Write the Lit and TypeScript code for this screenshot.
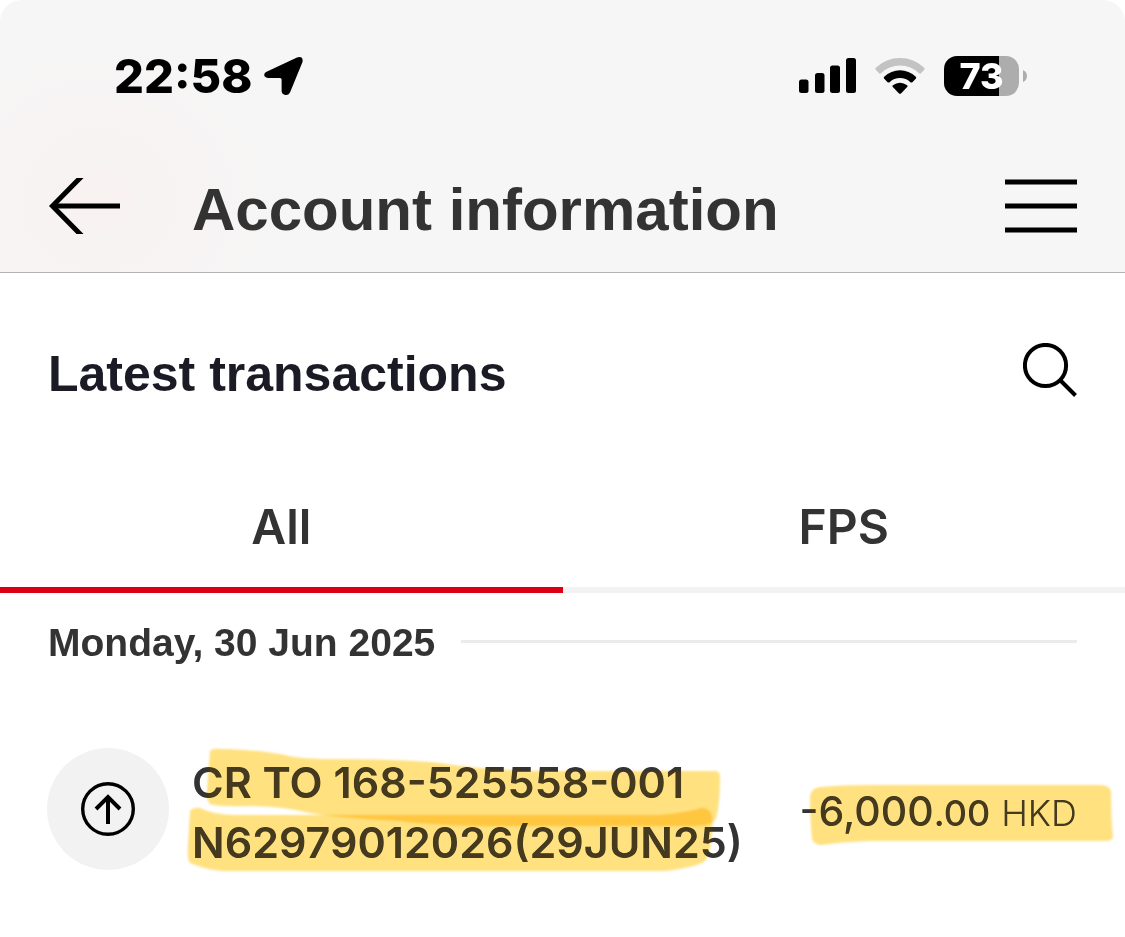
import { LitElement, html, css, svg } from "lit";
import { customElement, property, state } from "lit/decorators.js";
import { classMap } from "lit/directives/class-map.js";

const fontStack = css`"Inter", "Liberation Sans", sans-serif`;
const headingStack = css`"Liberation Sans", Arial, sans-serif`;

@customElement("status-bar")
class StatusBar extends LitElement {
  @property() time = "";
  @property({ type: Number }) battery = 100;

  static styles = css`
    :host {
      display: flex;
      justify-content: space-between;
      align-items: center;
      height: 152px;
      padding: 0 98px 0 114px;
      box-sizing: border-box;
      font-family: ${fontStack};
      color: #000;
    }
    .group {
      display: flex;
      align-items: center;
    }
    .left {
      gap: 12px;
    }
    .right {
      gap: 19px;
    }
    .time {
      font-size: 47px;
      line-height: 56px;
      font-weight: 800;
    }
    svg {
      display: block;
    }
    .power {
      display: flex;
      align-items: center;
      gap: 4px;
    }
    .cell {
      display: flex;
      align-items: center;
      justify-content: center;
      width: 75px;
      height: 40px;
      border-radius: 13px;
      background: linear-gradient(90deg, #000 73%, #adadad 73%);
      color: #fff;
      font-size: 36px;
      line-height: 40px;
      font-weight: 800;
    }
  `;

  render() {
    return html`
      <div class="group left">
        <span class="time">${this.time}</span>
        <svg width="40" height="40" viewBox="0 0 40 40" aria-hidden="true">
          <path d="M2 16 L33 1.400 Q39.500 -.5 38.500 6 L26 36.500 Q24.500 39.300 21.500 39 Q17.800 38.500 17.600 35 V23.500 Q17.600 22 16 22 H4.500 Q.5 21.500 .2 19 Q.2 17 2 16Z" />
        </svg>
      </div>
      <div class="group right">
        <svg width="57" height="36" viewBox="0 0 57 36" aria-hidden="true">
          <rect x="0" y="21.500" width="9.500" height="13.500" rx="2.500" />
          <rect x="16" y="15" width="9.500" height="20" rx="2.500" />
          <rect x="31" y="7.500" width="10" height="27.500" rx="2.500" />
          <rect x="47" y="0" width="10" height="35" rx="2.500" />
        </svg>
        <svg width="50" height="36" viewBox="0 0 50 36" aria-hidden="true">
          <path fill="#c3c3c3" d="M.6 11.500 Q0 10.500 .8 9.700 Q11 0 25 0 T49.200 9.700 Q50 10.500 49.400 11.500 L46 15.300 Q45 16.200 44 15.300 Q36 7.600 25 7.600 T6 15.300 Q5 16.200 4 15.300Z" />
          <path d="M9 20.500 Q8.400 19.500 9.200 18.700 Q16 12.200 25 12.200 T40.800 18.700 Q41.600 19.500 41 20.500 L37.400 24.200 Q36.400 25 35.400 24.200 Q31 20 25 20 T14.600 24.200 Q13.600 25 12.600 24.200Z" />
          <path d="M17.600 28.800 Q17.100 27.900 17.900 27.200 Q21 24.700 25 24.700 T32.100 27.200 Q32.900 27.900 32.400 28.800 L26 35.400 Q25 36.300 24 35.400Z" />
        </svg>
        <div class="power">
          <span class="cell">${this.battery}</span>
          <svg width="4" height="12" viewBox="0 0 4 12" aria-hidden="true">
            <path fill="#adadad" d="M0 0 Q4 2 4 6 T0 12Z" />
          </svg>
        </div>
      </div>
    `;
  }
}

interface Transaction {
  lines: string[];
  whole: string;
  cents: string;
  currency: string;
}

const transactions: Transaction[] = [
  {
    lines: ["CR TO 168-525558-001", "N62979012026(29JUN25)"],
    whole: "-6,000",
    cents: ".00",
    currency: "HKD",
  },
];

const detailStrokes = [
  "M210 751 Q213 748 220 749 Q262 750 285 755 Q300 759 330 759 Q400 759 440 763 Q480 770 540 771 H714 Q721 771 720 778 Q720 800 717 815 Q716 820 712 823 Q705 826 690 826 H500 Q440 826 400 821 Q340 818 310 813 Q280 806 250 806 Q220 807 210 804 Q206 800 207 790Z",
  "M190 811 Q193 807 200 808 Q214 815 235 815 H660 Q690 812 701 808 Q711 807 712 818 Q714 840 706 860 Q700 867 665 871 H225 Q210 871 190 863 Q187 860 188 845Z",
];
const amountStrokes = [
  "M810 797 Q811 789 820 788 Q840 786 870 786 H1100 Q1110 786 1111 793 Q1111 820 1113 838 Q1112 842 1104 842 H870 Q840 843 822 846 Q814 846 812 840 Q810 820 810 797Z",
];

@customElement("transaction-row")
class TransactionRow extends LitElement {
  @property({ attribute: false }) item!: Transaction;

  static styles = css`
    :host {
      display: flex;
      align-items: center;
      padding: 56px 48px 48px 47px;
      font-family: ${fontStack};
      color: #333;
    }
    .badge {
      display: flex;
      flex: none;
      align-items: center;
      justify-content: center;
      width: 122px;
      height: 122px;
      border-radius: 50%;
      background: #f2f2f2;
      margin-right: 23px;
    }
    svg {
      display: block;
    }
    .detail,
    .amount {
      position: relative;
      padding-top: 6px;
      white-space: nowrap;
      line-height: 60px;
    }
    .detail {
      font-size: 43px;
      font-weight: 600;
    }
    .amount {
      margin-left: auto;
      font-size: 41px;
      font-weight: 500;
    }
    .cents {
      font-size: 36px;
    }
    .currency {
      font-size: 36px;
      font-weight: 300;
    }
    .marker {
      position: absolute;
      pointer-events: none;
      filter: blur(1px);
    }
    .ink,
    .ink path {
      fill: #ffe180;
      mix-blend-mode: multiply;
    }
    .glow {
      fill: #463a1e;
      mix-blend-mode: lighten;
    }
    .wide {
      left: -12px;
      top: -6px;
    }
    .short {
      right: -48px;
      top: 4px;
    }
  `;

  // The ink tints the paper; the glow lifts the dark letters beneath it.
  private marker(place: string, width: number, height: number, origin: string, strokes: string[]) {
    return ["ink", "glow"].map(
      (layer) => html`
        <svg class="marker ${place} ${layer}" width=${width} height=${height} viewBox="${origin} ${width} ${height}" aria-hidden="true">
          ${strokes.map((d) => svg`<path d=${d} />`)}
        </svg>
      `
    );
  }

  render() {
    const { lines, whole, cents, currency } = this.item;
    return html`
      <div class="badge">
        <svg width="56" height="56" viewBox="0 0 56 56" fill="none" stroke="#000" aria-hidden="true">
          <circle cx="28" cy="28" r="25.300" stroke-width="3.400" />
          <path d="M28 43V16" stroke-width="4" />
          <path d="M16 28 L28 16 L40 28" stroke-width="4" />
        </svg>
      </div>
      <div class="detail">
        ${lines.map((line) => html`<div>${line}</div>`)}
        ${this.marker("wide", 570, 140, "180 740", detailStrokes)}
      </div>
      <div class="amount">
        <span>${whole}</span><span class="cents">${cents}</span>
        <span class="currency">${currency}</span>
        ${this.marker("short", 325, 70, "800 780", amountStrokes)}
      </div>
    `;
  }
}

@customElement("app-root")
class AppRoot extends LitElement {
  @state() private selected = "All";

  static styles = css`
    :host {
      display: block;
      min-height: 100vh;
      background: #fff;
      font-family: ${fontStack};
      color: #333;
    }
    header {
      border-bottom: 1px solid #b3b3b3;
      border-radius: 22px 22px 0 0;
      background: radial-gradient(ellipse 200px 180px at 100px 200px, #f8f2f1, #f5f5f500), #f6f6f6;
    }
    button {
      border: 0;
      padding: 0;
      background: none;
      font: inherit;
      color: inherit;
      cursor: pointer;
    }
    svg {
      display: block;
      fill: none;
      stroke: #000;
    }
    h1,
    h2,
    h3 {
      margin: 0;
      font-family: ${headingStack};
      font-weight: 700;
    }
    nav {
      display: flex;
      align-items: center;
      height: 108px;
      padding: 0 48px 12px;
    }
    h1 {
      flex: 1;
      padding: 8px 0 0 72px;
      font-size: 60px;
      line-height: 72px;
    }
    .heading {
      display: flex;
      align-items: center;
      justify-content: space-between;
      height: 193px;
      padding: 0 48px;
    }
    h2 {
      padding-top: 8px;
      font-size: 50px;
      line-height: 60px;
      color: #1b1b25;
    }
    .tabs {
      display: grid;
      grid-template-columns: 1fr 1fr;
    }
    .tab {
      height: 127px;
      border-bottom: 6px solid #f2f2f2;
      font-size: 48px;
      line-height: 60px;
      font-weight: 600;
    }
    .tab.active {
      border-color: #db0011;
    }
    .date {
      display: flex;
      align-items: center;
      gap: 26px;
      height: 97px;
      padding: 0 48px;
    }
    h3 {
      padding-top: 3px;
      font-size: 39px;
      line-height: 48px;
    }
    .rule {
      flex: 1;
      height: 3px;
      background: #ebebeb;
    }
  `;

  render() {
    return html`
      <header>
        <status-bar time="22:58" battery="73"></status-bar>
        <nav>
          <button aria-label="Back">
            <svg width="72" height="56" viewBox="0 0 72 56" stroke-width="5">
              <path d="M4 28H72" />
              <path d="M34 -2 L4.500 28 L34 58" />
            </svg>
          </button>
          <h1>Account information</h1>
          <button aria-label="Menu">
            <svg width="72" height="56" viewBox="0 0 72 56" stroke-width="5">
              <path d="M0 4H72M0 28H72M0 52H72" />
            </svg>
          </button>
        </nav>
      </header>
      <main>
        <div class="heading">
          <h2>Latest transactions</h2>
          <button aria-label="Search">
            <svg width="54" height="54" viewBox="0 0 54 54" stroke-width="4">
              <circle cx="22.500" cy="22.500" r="20.600" />
              <path d="M37 37 L52.500 52.500" />
            </svg>
          </button>
        </div>
        <div class="tabs" role="tablist">
          ${["All", "FPS"].map(
            (name) => html`
              <button
                role="tab"
                aria-selected=${this.selected === name ? "true" : "false"}
                class=${classMap({ tab: true, active: this.selected === name })}
                @click=${() => (this.selected = name)}
              >${name}</button>
            `
          )}
        </div>
        <div class="date">
          <h3>Monday, 30 Jun 2025</h3>
          <div class="rule"></div>
        </div>
        ${transactions.map((item) => html`<transaction-row .item=${item}></transaction-row>`)}
      </main>
    `;
  }
}
